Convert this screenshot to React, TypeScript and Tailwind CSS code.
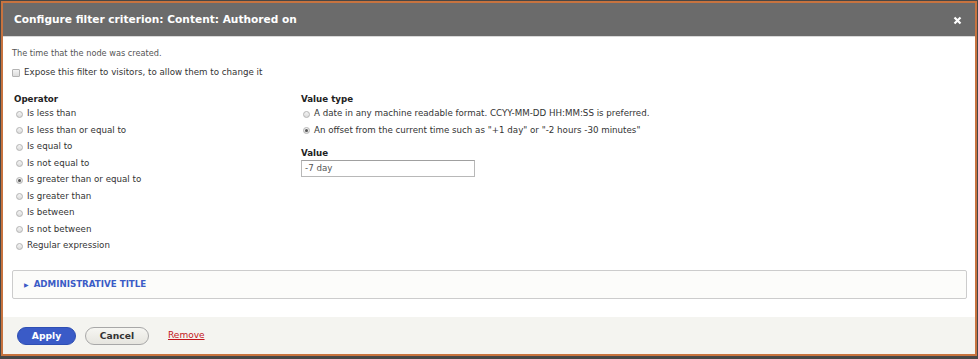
export default function App() {
  const operators = [
    "Is less than",
    "Is less than or equal to",
    "Is equal to",
    "Is not equal to",
    "Is greater than or equal to",
    "Is greater than",
    "Is between",
    "Is not between",
    "Regular expression",
  ];
  const checkedOp = 4;

  const valueTypes = [
    "A date in any machine readable format. CCYY-MM-DD HH:MM:SS is preferred.",
    'An offset from the current time such as "+1 day" or "-2 hours -30 minutes"',
  ];

  const Radio = ({ checked }: { checked?: boolean }) => (
    <span className="flex h-[7px] w-[7px] shrink-0 items-center justify-center rounded-full border border-[#b3b3b3] bg-gradient-to-b from-[#f4f4f4] to-[#dcdcdc]">
      {checked && <span className="h-[3px] w-[3px] rounded-full bg-[#555]" />}
    </span>
  );

  return (
    <div
      className="h-[359px] w-[978px] overflow-hidden bg-[#474747] pt-[1px] pl-[1px]"
      style={{ fontFamily: '"DejaVu Sans", Verdana, sans-serif' }}
    >
      <div className="flex h-[355px] w-[976px] flex-col border-2 border-[#c7733f] bg-white">
        {/* header */}
        <div className="flex h-[33px] shrink-0 items-center justify-between bg-[#6b6b6b] pl-[11px] pr-[13px]">
          <h1 className="text-[10.6px] font-bold text-white">
            Configure filter criterion: Content: Authored on
          </h1>
          <svg width="9" height="9" viewBox="0 0 9 9" className="mt-[1px]">
            <path d="M1.5 1.5 L7.5 7.5 M7.5 1.5 L1.5 7.5" stroke="white" strokeWidth="2.2" strokeLinecap="butt" />
          </svg>
        </div>
        <div className="h-px shrink-0 bg-[#d9d9d9]" />

        {/* body */}
        <div className="flex-1 pl-[9px] pr-[8px] pt-[10px]">
          <p className="h-[12px] text-[8.2px] leading-[12px] text-[#555]">
            The time that the node was created.
          </p>
          <label className="mt-[8px] flex h-[12px] items-center gap-[4px] text-[8.7px] text-[#333]">
            <span className="h-[8px] w-[8px] rounded-[1px] border border-[#b3b3b3] bg-gradient-to-b from-[#f4f4f4] to-[#dcdcdc]" />
            Expose this filter to visitors, to allow them to change it
          </label>

          <div className="mt-[14px] flex">
            <div className="w-[289px] pl-[2px]">
              <div className="h-[12.75px] text-[8.7px] font-bold leading-[12px] text-[#222]">Operator</div>
              {operators.map((op, i) => (
                <div key={op} className="flex h-[16.5px] items-center gap-[4px] pl-[2px] text-[8.7px] text-[#333]">
                  <Radio checked={i === checkedOp} />
                  {op}
                </div>
              ))}
            </div>
            <div>
              <div className="h-[12.75px] text-[8.7px] font-bold leading-[12px] text-[#222]">Value type</div>
              {valueTypes.map((t, i) => (
                <div key={t} className="flex h-[16.5px] items-center gap-[4px] pl-[2px] text-[8.7px] text-[#333]">
                  <Radio checked={i === 1} />
                  {t}
                </div>
              ))}
              <div className="mt-[8px] h-[12px] text-[8.7px] font-bold leading-[12px] text-[#222]">Value</div>
              <div className="mt-[1px] flex h-[17px] w-[174px] items-center border border-[#b8b8b8] border-t-[#a0a0a0] bg-white pl-[3px] text-[8.7px] text-[#555]">
                -7 day
              </div>
            </div>
          </div>

          <div className="mt-[16px] flex h-[29px] items-center rounded-[2px] border border-[#cccccc] bg-[#fcfcfa] pl-[11px]">
            <span className="mr-[5px] text-[6px] text-[#3b5bc6]">▶</span>
            <span className="text-[8.7px] font-bold text-[#3b5bc6]">ADMINISTRATIVE TITLE</span>
          </div>
        </div>

        {/* footer */}
        <div className="flex h-[37px] shrink-0 items-center bg-[#f4f4f0] pl-[14px]">
          <button className="flex h-[18px] w-[59px] items-center justify-center rounded-full border border-[#2e4fb3] bg-[#3a5bc7] text-[9.2px] font-bold text-white">
            Apply
          </button>
          <button className="ml-[9px] flex h-[18px] w-[64px] items-center justify-center rounded-full border border-[#a8a8a8] bg-gradient-to-b from-[#f6f6f2] to-[#e6e5df] text-[9.2px] font-bold text-[#333]">
            Cancel
          </button>
          <a className="ml-[19px] text-[9px] text-[#c3161c] underline">Remove</a>
        </div>
      </div>
    </div>
  );
}
